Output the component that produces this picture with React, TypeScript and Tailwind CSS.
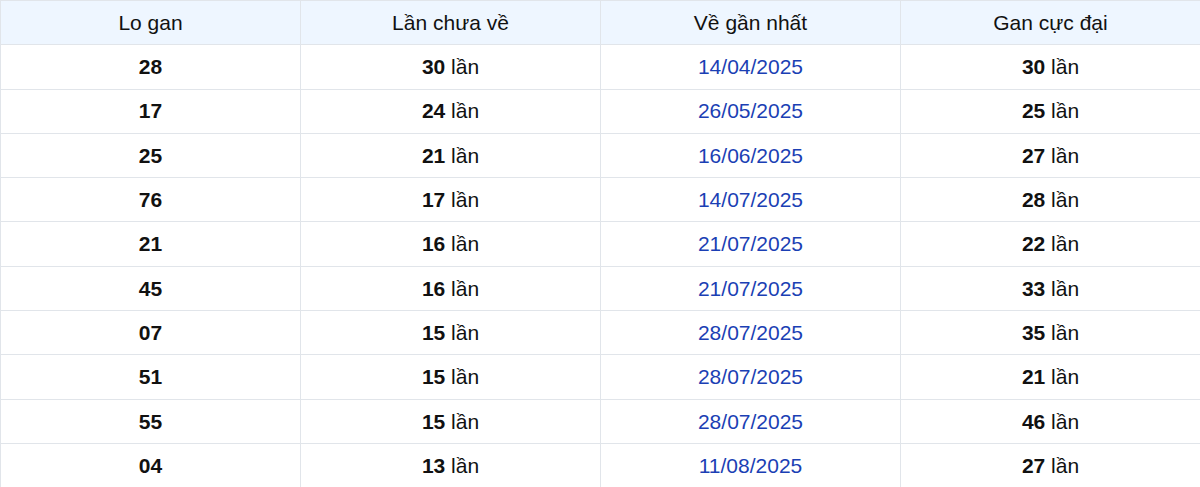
const rows = [
  { lo: '28', chua: 30, ngay: '14/04/2025', max: 30 },
  { lo: '17', chua: 24, ngay: '26/05/2025', max: 25 },
  { lo: '25', chua: 21, ngay: '16/06/2025', max: 27 },
  { lo: '76', chua: 17, ngay: '14/07/2025', max: 28 },
  { lo: '21', chua: 16, ngay: '21/07/2025', max: 22 },
  { lo: '45', chua: 16, ngay: '21/07/2025', max: 33 },
  { lo: '07', chua: 15, ngay: '28/07/2025', max: 35 },
  { lo: '51', chua: 15, ngay: '28/07/2025', max: 21 },
  { lo: '55', chua: 15, ngay: '28/07/2025', max: 46 },
  { lo: '04', chua: 13, ngay: '11/08/2025', max: 27 },
]

export default function App() {
  return (
    <div className="w-[1200px] h-[487px] overflow-hidden bg-white font-['Liberation_Sans',Arial,sans-serif] text-[21px] text-[#111]">
      <table className="w-[1201px] border-collapse table-fixed">
        <thead>
          <tr className="h-[44.3px] bg-[#eef6ff]">
            {['Lo gan', 'Lần chưa về', 'Về gần nhất', 'Gan cực đại'].map((h) => (
              <th key={h} className="w-[300px] border border-[#e1e5ea] font-normal text-center p-0">
                {h}
              </th>
            ))}
          </tr>
        </thead>
        <tbody>
          {rows.map((r, i) => (
            <tr key={i} className="h-[44.3px]">
              <td className="border border-[#e1e5ea] text-center font-bold p-0">{r.lo}</td>
              <td className="border border-[#e1e5ea] text-center p-0">
                <b>{r.chua}</b> lần
              </td>
              <td className="border border-[#e1e5ea] text-center text-[#1b3fb4] p-0">{r.ngay}</td>
              <td className="border border-[#e1e5ea] text-center p-0">
                <b>{r.max}</b> lần
              </td>
            </tr>
          ))}
        </tbody>
      </table>
    </div>
  )
}
